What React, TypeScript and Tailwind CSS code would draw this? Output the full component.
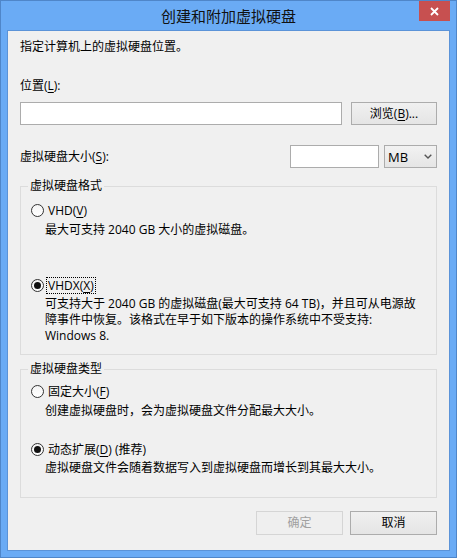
import React from "react";

const font = { fontFamily: '"Open Sans", "Noto Sans CJK SC", sans-serif' };

function Key({ k }: { k: string }) {
  return <span className="underline underline-offset-2">{k}</span>;
}

function Radio({ checked }: { checked?: boolean }) {
  return (
    <span className="w-[13px] h-[13px] rounded-full border border-[#333333] bg-gradient-to-b from-[#f4f4f4] to-white flex items-center justify-center shrink-0">
      {checked && <span className="w-[7px] h-[7px] rounded-full bg-[#111111]" />}
    </span>
  );
}

function Option({
  checked,
  focused,
  children,
}: {
  checked?: boolean;
  focused?: boolean;
  children: React.ReactNode;
}) {
  return (
    <div className="flex items-center h-[17px] pl-[3px]">
      <Radio checked={checked} />
      <span
        className={
          "ml-[2px] px-[1px] leading-[15px] border " +
          (focused ? "border-dotted border-black" : "border-transparent")
        }
      >
        {children}
      </span>
    </div>
  );
}

function Group({ title, children, className }: { title: string; children: React.ReactNode; className?: string }) {
  return (
    <fieldset className={"border border-[#dcdcdc] px-[7px] " + (className ?? "")}>
      <legend className="px-[2px] leading-[16px]">{title}</legend>
      {children}
    </fieldset>
  );
}

export default function App() {
  return (
    <div
      className="w-[457px] h-[558px] bg-[#6aabf5] border border-[#4f86c9] flex flex-col text-[12px] text-black"
      style={font}
    >
      {/* title bar */}
      <div className="h-[29px] relative flex items-center justify-center">
        <span
          className="text-[15px] leading-[20px] text-[#111111] pt-[1px]"
          style={{ fontFamily: '"Noto Sans CJK SC", sans-serif' }}
        >
          创建和附加虚拟硬盘
        </span>
        <div className="absolute top-0 right-[6px] w-[31px] h-[20px] bg-[#c75050] flex items-center justify-center">
          <svg width="9" height="9" viewBox="0 0 9 9">
            <path d="M1 1 L8 8 M8 1 L1 8" stroke="white" strokeWidth="1.8" />
          </svg>
        </div>
      </div>

      {/* client area */}
      <div className="mx-[6px] h-[521px] border border-[#5b93d8] bg-[#f0f0f0] px-[12px] pt-[8px] flex flex-col">
        <div className="leading-[16px]">指定计算机上的虚拟硬盘位置。</div>
        <div className="leading-[16px] mt-[23px]">
          位置(<Key k="L" />):
        </div>
        <div className="flex mt-[8px] h-[23px]">
          <div className="w-[322px] border border-[#acacac] bg-white" />
          <button className="ml-[9px] w-[86px] border border-[#acacac] bg-gradient-to-b from-[#f0f0f0] to-[#e5e5e5] leading-[16px]">
            浏览(<Key k="B" />)...
          </button>
        </div>

        <div className="flex items-center mt-[20px] h-[23px]">
          <span className="leading-[16px]">
            虚拟硬盘大小(<Key k="S" />):
          </span>
          <div className="ml-auto w-[89px] h-full border border-[#acacac] bg-white" />
          <div className="ml-[5px] w-[53px] h-full border border-[#acacac] bg-gradient-to-b from-[#f2f2f2] to-[#e5e5e5] flex items-center pl-[3px] pr-[4px]">
            <span className="text-[13px] leading-[16px]">MB</span>
            <svg className="ml-auto" width="8" height="5" viewBox="0 0 8 5">
              <polyline points="0.7,0.7 4,4 7.3,0.7" fill="none" stroke="#555555" strokeWidth="1.4" />
            </svg>
          </div>
        </div>

        <Group title="虚拟硬盘格式" className="mt-[10px] pt-[8px] pb-[10px]">
          <Option>
            VHD(<Key k="V" />)
          </Option>
          <div className="pl-[17px] leading-[16px] mt-[3px]">最大可支持 2040 GB 大小的虚拟磁盘。</div>
          <div className="mt-[39px]">
            <Option checked focused>
              VHDX(<Key k="X" />)
            </Option>
          </div>
          <div className="pl-[17px] leading-[16px] mt-[2px]">
            <div>可支持大于 2040 GB 的虚拟磁盘(最大可支持 64 TB)，并且可从电源故</div>
            <div>障事件中恢复。该格式在早于如下版本的操作系统中不受支持:</div>
            <div>Windows 8.</div>
          </div>
        </Group>

        <Group title="虚拟硬盘类型" className="mt-[6px] pt-[6px] pb-[21px]">
          <Option>
            固定大小(<Key k="F" />)
          </Option>
          <div className="pl-[17px] leading-[16px] mt-[3px]">创建虚拟硬盘时，会为虚拟硬盘文件分配最大大小。</div>
          <div className="mt-[22px]">
            <Option checked>
              动态扩展(<Key k="D" />) (推荐)
            </Option>
          </div>
          <div className="pl-[17px] leading-[16px] mt-[2px]">虚拟硬盘文件会随着数据写入到虚拟硬盘而增长到其最大大小。</div>
        </Group>

        <div className="flex justify-end gap-[7px] mt-[13px]">
          <button className="w-[87px] h-[24px] border border-[#d5d5d5] bg-[#efefef] text-[#a0a0a0] leading-[16px]">
            确定
          </button>
          <button className="w-[87px] h-[24px] border border-[#acacac] bg-gradient-to-b from-[#f0f0f0] to-[#e5e5e5] leading-[16px]">
            取消
          </button>
        </div>
      </div>
    </div>
  );
}
